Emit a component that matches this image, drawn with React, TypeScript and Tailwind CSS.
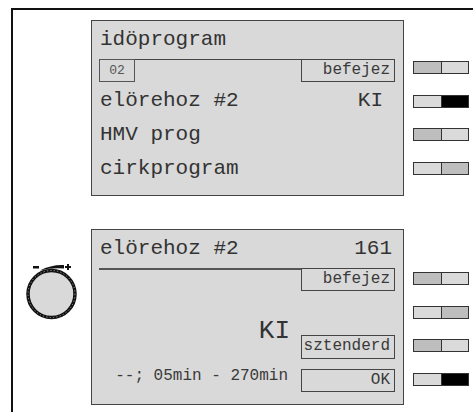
import React from 'react';

type Seg = 'gray' | 'light' | 'black';

const segClass: Record<Seg, string> = {
  gray: 'bg-[#bebebe]',
  light: 'bg-[#dadada]',
  black: 'bg-black',
};

function Switch({ left, right, className = '' }: { left: Seg; right: Seg; className?: string }) {
  return (
    <div className={`flex h-[13px] w-[56px] border border-[#333] ${className}`}>
      <div className={`w-[27px] ${segClass[left]}`} />
      <div className={`flex-1 border-l border-[#333] ${segClass[right]}`} />
    </div>
  );
}

function SoftKey({ label, className = '' }: { label: string; className?: string }) {
  return (
    <div className={`w-[94px] h-[23px] border border-[#444] text-right pr-[4px] text-[16px] leading-[21px] text-[#3a3a3a] ${className}`}>
      {label}
    </div>
  );
}

// Drehknopf mit -/+ Markierung
function Knob() {
  return (
    <svg width="56" height="58" viewBox="0 0 56 58" className="ml-[10px] mt-[33px]">
      <rect x="10" y="4" width="6" height="2.5" fill="#111" />
      <rect x="42" y="4" width="6" height="2" fill="#111" />
      <rect x="44" y="2" width="2" height="6" fill="#111" />
      <path d="M17 8.5 Q28 2.5 41 3 L41 6.5 Q28 5.5 17 8.5 Z" fill="#111" />
      <circle cx="28.5" cy="32" r="23.5" fill="#d9d9d9" stroke="#111" strokeWidth="3.5" />
      <circle cx="28.5" cy="32" r="23.5" fill="none" stroke="#9a9a9a" strokeWidth="1" strokeDasharray="1.2 2.2" />
    </svg>
  );
}

export default function App() {
  return (
    <div className="w-[473px] h-[412px] overflow-hidden bg-white font-['Liberation_Mono',monospace] text-[#333]">
      <div className="ml-[11px] mt-[8px] w-[480px] h-[420px] border-l-2 border-t-2 border-[#111] pt-[10px]">
        {/* oberer Bildschirm */}
        <div className="flex items-start">
          <div className="w-[78px]" />
          <div className="w-[313px] h-[176px] border border-[#444] bg-[#d9d9d9] pl-[7px] pr-[8px]">
            <div className="h-[38px] text-[21px] leading-[38px] pl-[1px]">idöprogram</div>
            <div className="flex h-[23px]">
              <div className="w-[36px] h-[23px] border border-[#555] text-center text-[13px] leading-[21px] text-[#555]">02</div>
              <div className="flex-1 border-t border-[#444]" />
              <SoftKey label="befejez" />
            </div>
            <div className="mt-[2px] flex justify-between h-[34px] text-[21px] leading-[34px] pl-[1px]">
              <span>elörehoz #2</span>
              <span className="pr-[12px]">KI</span>
            </div>
            <div className="h-[34px] text-[21px] leading-[34px] pl-[1px]">HMV prog</div>
            <div className="h-[34px] text-[21px] leading-[34px] pl-[1px]">cirkprogram</div>
          </div>
          <div className="ml-[9px] pt-[41px] flex flex-col">
            <Switch left="gray" right="light" />
            <Switch left="light" right="black" className="mt-[21px]" />
            <Switch left="gray" right="light" className="mt-[20px]" />
            <Switch left="light" right="gray" className="mt-[21px]" />
          </div>
        </div>

        {/* unterer Bildschirm */}
        <div className="mt-[33px] flex items-start">
          <div className="w-[78px]">
            <Knob />
          </div>
          <div className="w-[313px] h-[176px] border border-[#444] bg-[#d9d9d9] pl-[7px] pr-[8px]">
            <div className="flex justify-between h-[38px] text-[21px] leading-[38px] pl-[1px]">
              <span>elörehoz #2</span>
              <span className="pr-[3px]">161</span>
            </div>
            <div className="flex items-start">
              <div className="flex-1 flex flex-col items-end">
                <div className="self-stretch border-t-2 border-[#555]" />
                <div className="mt-[48px] mr-[11px] text-[26px] leading-[26px]">KI</div>
                <div className="mt-[24px] mr-[13px] text-[16px] leading-[16px] text-[#3a3a3a]">--; 05min - 270min</div>
              </div>
              <div className="flex flex-col">
                <SoftKey label="befejez" />
                <SoftKey label="sztenderd" className="mt-[44px] h-[24px] pr-[2px]" />
                <SoftKey label="OK" className="mt-[10px]" />
              </div>
            </div>
          </div>
          <div className="ml-[9px] pt-[43px] flex flex-col">
            <Switch left="gray" right="light" />
            <Switch left="light" right="gray" className="mt-[21px]" />
            <Switch left="gray" right="light" className="mt-[20px]" />
            <Switch left="light" right="black" className="mt-[21px]" />
          </div>
        </div>
      </div>
    </div>
  );
}
